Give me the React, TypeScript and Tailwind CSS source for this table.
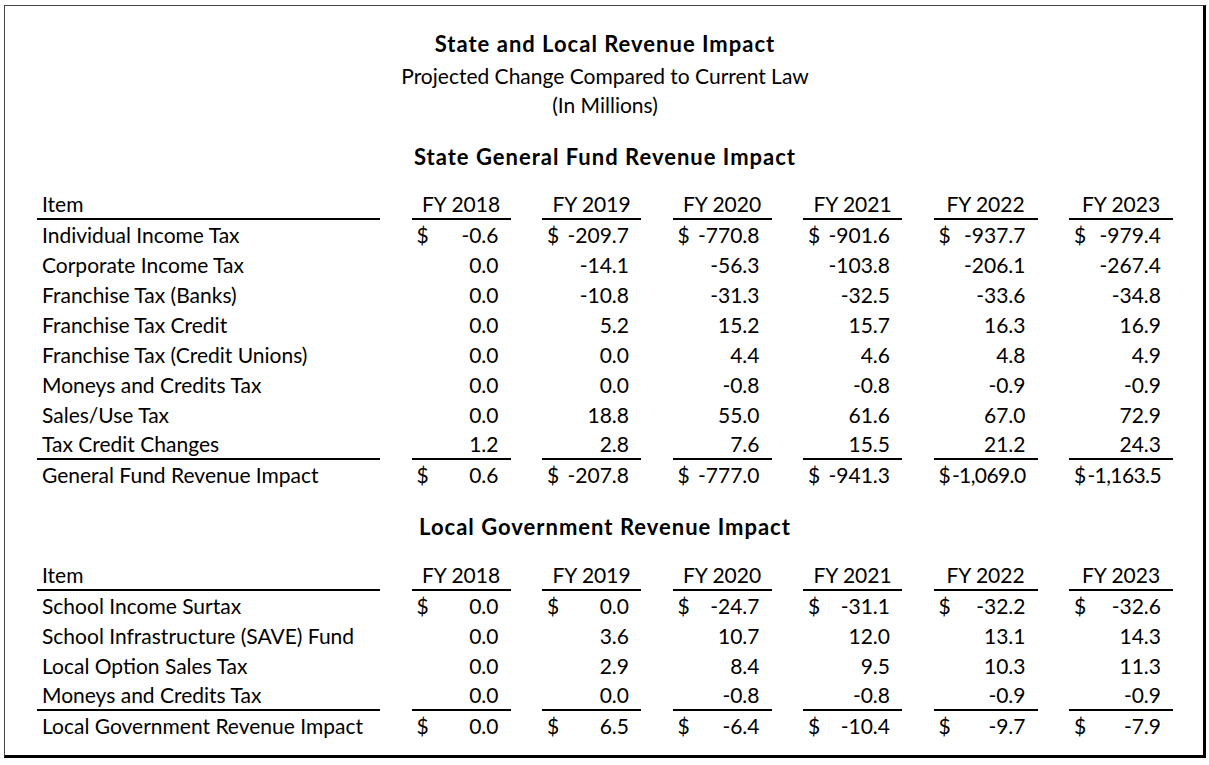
const YEARS = ["FY 2018", "FY 2019", "FY 2020", "FY 2021", "FY 2022", "FY 2023"];

type Row = { label: string; values: string[]; dollar?: boolean };

const stateRows: Row[] = [
  { label: "Individual Income Tax", values: ["-0.6", "-209.7", "-770.8", "-901.6", "-937.7", "-979.4"], dollar: true },
  { label: "Corporate Income Tax", values: ["0.0", "-14.1", "-56.3", "-103.8", "-206.1", "-267.4"] },
  { label: "Franchise Tax (Banks)", values: ["0.0", "-10.8", "-31.3", "-32.5", "-33.6", "-34.8"] },
  { label: "Franchise Tax Credit", values: ["0.0", "5.2", "15.2", "15.7", "16.3", "16.9"] },
  { label: "Franchise Tax (Credit Unions)", values: ["0.0", "0.0", "4.4", "4.6", "4.8", "4.9"] },
  { label: "Moneys and Credits Tax", values: ["0.0", "0.0", "-0.8", "-0.8", "-0.9", "-0.9"] },
  { label: "Sales/Use Tax", values: ["0.0", "18.8", "55.0", "61.6", "67.0", "72.9"] },
  { label: "Tax Credit Changes", values: ["1.2", "2.8", "7.6", "15.5", "21.2", "24.3"] },
];
const stateTotal: Row = {
  label: "General Fund Revenue Impact",
  values: ["0.6", "-207.8", "-777.0", "-941.3", "-1,069.0", "-1,163.5"],
  dollar: true,
};

const localRows: Row[] = [
  { label: "School Income Surtax", values: ["0.0", "0.0", "-24.7", "-31.1", "-32.2", "-32.6"], dollar: true },
  { label: "School Infrastructure (SAVE) Fund", values: ["0.0", "3.6", "10.7", "12.0", "13.1", "14.3"] },
  { label: "Local Option Sales Tax", values: ["0.0", "2.9", "8.4", "9.5", "10.3", "11.3"] },
  { label: "Moneys and Credits Tax", values: ["0.0", "0.0", "-0.8", "-0.8", "-0.9", "-0.9"] },
];
const localTotal: Row = {
  label: "Local Government Revenue Impact",
  values: ["0.0", "6.5", "-6.4", "-10.4", "-9.7", "-7.9"],
  dollar: true,
};

const gridCols = "grid grid-cols-[343px_99px_99px_99px_99px_104px_104px] gap-x-[31.5px]";

function Line({ row, underline }: { row: Row; underline?: boolean }) {
  const b = underline ? "border-b-2 border-black" : "";
  return (
    <>
      <div className={`h-[30px] flex items-center pl-[5px] ${b}`}>{row.label}</div>
      {row.values.map((v, i) => (
        <div key={i} className={`h-[30px] flex items-center justify-between pl-[5px] pr-[12px] ${b}`}>
          <span>{row.dollar ? "$" : ""}</span>
          <span className={v.length > 7 ? "tracking-[-0.6px]" : ""}>{v}</span>
        </div>
      ))}
    </>
  );
}

function Section({ title, rows, total, titleGap, headGap }: { title: string; rows: Row[]; total: Row; titleGap: string; headGap: string }) {
  return (
    <div className={titleGap}>
      <div className="h-[30px] flex items-center justify-center font-bold text-[22px] tracking-[1px]">{title}</div>
      <div className={`${gridCols} ${headGap}`}>
        <div className="h-[30px] flex items-center pl-[5px] border-b-2 border-black">Item</div>
        {YEARS.map((y) => (
          <div key={y} className="h-[30px] flex items-center justify-center border-b-2 border-black">
            {y}
          </div>
        ))}
        {rows.map((r, i) => (
          <Line key={r.label} row={r} underline={i === rows.length - 1} />
        ))}
        <Line row={total} />
      </div>
    </div>
  );
}

export default function App() {
  return (
    <div className="w-[1209px] h-[765px] bg-white text-black pt-[5px] pl-[4px] font-['Lato',sans-serif] text-[21px]">
      <div className="w-[1202px] h-[753px] border-l border-t border-[#444] border-r-[3px] border-b-[3px] border-r-black border-b-black pl-[32px] pt-[22px]">
        <div className="w-[1136px]">
          <div className="h-[30px] flex items-center justify-center font-bold text-[22px] tracking-[1px]">State and Local Revenue Impact</div>
          <div className="mt-[3px] leading-[29px] text-center">
            <div>Projected Change Compared to Current Law</div>
            <div>(In Millions)</div>
          </div>
          <Section title="State General Fund Revenue Impact" rows={stateRows} total={stateTotal} titleGap="mt-[22px]" headGap="mt-[19px]" />
          <Section title="Local Government Revenue Impact" rows={localRows} total={localTotal} titleGap="mt-[21px]" headGap="mt-[20px]" />
        </div>
      </div>
    </div>
  );
}
